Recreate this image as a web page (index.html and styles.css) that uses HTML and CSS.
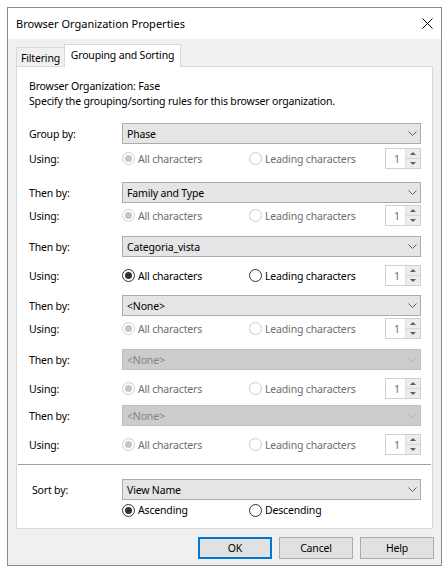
FILE: index.html
```html
<!DOCTYPE html>
<html lang="en">
<head>
<meta charset="utf-8">
<title>Browser Organization Properties</title>
<link rel="stylesheet" href="styles.css">
</head>
<body>
<div class="window">
  <div class="titlebar">
    <span class="title">Browser Organization Properties</span>
    <svg class="close" width="11" height="11" viewBox="0 0 11 11"><path d="M0.5 0.5L10.5 10.5M10.5 0.5L0.5 10.5" stroke="#000" stroke-width="1" fill="none"/></svg>
  </div>
  <div class="client">
    <div class="tabs">
      <div class="tab">Filtering</div>
      <div class="tab tab--active">Grouping and Sorting</div>
    </div>
    <div class="panel">
      <div class="intro">
        <div>Browser Organization: Fase</div>
        <div>Specify the grouping/sorting rules for this browser organization.</div>
      </div>

      <div class="rule g1">
        <div class="row"><span class="label">Group by:</span><div class="combo"><span>Phase</span><svg class="chev" width="9" height="5" viewBox="0 0 9 5"><path d="M0.5 0.5L4.5 4.5L8.5 0.5" fill="none" stroke="#606060"/></svg></div></div>
        <div class="row using"><span class="label">Using:</span><span class="radio is-disabled is-checked"><i></i>All characters</span><span class="radio is-disabled"><i></i>Leading characters</span><div class="spin"><span class="val">1</span><span class="arrows"><b class="up"></b><b class="down"></b></span></div></div>
      </div>

      <div class="rule g2">
        <div class="row"><span class="label">Then by:</span><div class="combo"><span>Family and Type</span><svg class="chev" width="9" height="5" viewBox="0 0 9 5"><path d="M0.5 0.5L4.5 4.5L8.5 0.5" fill="none" stroke="#606060"/></svg></div></div>
        <div class="row using"><span class="label">Using:</span><span class="radio is-disabled is-checked"><i></i>All characters</span><span class="radio is-disabled"><i></i>Leading characters</span><div class="spin"><span class="val">1</span><span class="arrows"><b class="up"></b><b class="down"></b></span></div></div>
      </div>

      <div class="rule g3">
        <div class="row"><span class="label">Then by:</span><div class="combo"><span>Categoria_vista</span><svg class="chev" width="9" height="5" viewBox="0 0 9 5"><path d="M0.5 0.5L4.5 4.5L8.5 0.5" fill="none" stroke="#606060"/></svg></div></div>
        <div class="row using"><span class="label">Using:</span><span class="radio is-checked"><i></i>All characters</span><span class="radio"><i></i>Leading characters</span><div class="spin"><span class="val">1</span><span class="arrows"><b class="up"></b><b class="down"></b></span></div></div>
      </div>

      <div class="rule g4">
        <div class="row"><span class="label">Then by:</span><div class="combo"><span>&lt;None&gt;</span><svg class="chev" width="9" height="5" viewBox="0 0 9 5"><path d="M0.5 0.5L4.5 4.5L8.5 0.5" fill="none" stroke="#606060"/></svg></div></div>
        <div class="row using"><span class="label">Using:</span><span class="radio is-disabled is-checked"><i></i>All characters</span><span class="radio is-disabled"><i></i>Leading characters</span><div class="spin"><span class="val">1</span><span class="arrows"><b class="up"></b><b class="down"></b></span></div></div>
      </div>

      <div class="rule g5">
        <div class="row"><span class="label">Then by:</span><div class="combo combo--disabled"><span>&lt;None&gt;</span><svg class="chev" width="9" height="5" viewBox="0 0 9 5"><path d="M0.5 0.5L4.5 4.5L8.5 0.5" fill="none" stroke="#b4b4b4"/></svg></div></div>
        <div class="row using"><span class="label">Using:</span><span class="radio is-disabled is-checked"><i></i>All characters</span><span class="radio is-disabled"><i></i>Leading characters</span><div class="spin"><span class="val">1</span><span class="arrows"><b class="up"></b><b class="down"></b></span></div></div>
      </div>

      <div class="rule g6">
        <div class="row"><span class="label">Then by:</span><div class="combo combo--disabled"><span>&lt;None&gt;</span><svg class="chev" width="9" height="5" viewBox="0 0 9 5"><path d="M0.5 0.5L4.5 4.5L8.5 0.5" fill="none" stroke="#b4b4b4"/></svg></div></div>
        <div class="row using"><span class="label">Using:</span><span class="radio is-disabled is-checked"><i></i>All characters</span><span class="radio is-disabled"><i></i>Leading characters</span><div class="spin"><span class="val">1</span><span class="arrows"><b class="up"></b><b class="down"></b></span></div></div>
      </div>

      <div class="sep"></div>

      <div class="sort">
        <div class="row"><span class="label label--sort">Sort by:</span><div class="combo"><span>View Name</span><svg class="chev" width="9" height="5" viewBox="0 0 9 5"><path d="M0.5 0.5L4.5 4.5L8.5 0.5" fill="none" stroke="#606060"/></svg></div></div>
        <div class="row order"><span class="label"></span><span class="radio is-checked"><i></i>Ascending</span><span class="radio"><i></i>Descending</span></div>
      </div>
    </div>
    <div class="buttons">
      <button class="btn btn--default">OK</button>
      <button class="btn">Cancel</button>
      <button class="btn">Help</button>
    </div>
  </div>
</div>
</body>
</html>
```

FILE: styles.css
```css
* { box-sizing: border-box; }
html, body { margin: 0; padding: 0; background: #ffffff; }
body {
  font-family: "Noto Sans", "Open Sans", sans-serif;
  font-size: 10.5px;
  letter-spacing: -0.17px;
  color: #000;
  padding: 7px 0 0 7px;
}
.window {
  width: 435px;
  height: 559px;
  border: 1px solid #8a8a8a;
  background: #f0f0f0;
  display: flex;
  flex-direction: column;
}
.titlebar {
  height: 31px;
  flex: none;
  background: #fff;
  display: flex;
  align-items: center;
  justify-content: space-between;
  padding: 0 8px 0 8px;
}
.title { font-size: 11px; letter-spacing: 0; }
.client {
  flex: 1;
  padding: 5px 8px 6px 8px;
  display: flex;
  flex-direction: column;
}
.tabs {
  display: flex;
  align-items: flex-end;
  height: 22px;
  flex: none;
}
.tab {
  height: 19px;
  width: 48px;
  border: 1px solid #d9d9d9;
  border-bottom: none;
  border-right: none;
  background: #f0f0f0;
  display: flex;
  align-items: center;
  justify-content: center;
  padding-top: 1px;
}
.tab--active {
  height: 23px;
  width: 117px;
  border-right: 1px solid #d9d9d9;
  background: #fff;
  margin-bottom: -1px;
  position: relative;
  z-index: 1;
  padding-top: 0;
  padding-bottom: 3px;
}
.panel {
  height: 463px;
  flex: none;
  border: 1px solid #d9d9d9;
  background: #fff;
  padding: 12px 11px 0 12px;
}
.intro { line-height: 15px; }

.row {
  display: grid;
  grid-template-columns: 93px 1fr;
  align-items: center;
  height: 21px;
}
.row.using { grid-template-columns: 93px 127px 1fr 36px; }
.row.order { grid-template-columns: 93px 127px 1fr; height: 16px; }
.label { white-space: nowrap; }
.label--sort { padding-left: 3px; }

.combo {
  height: 21px;
  border: 1px solid #acacac;
  background: #e5e5e5;
  display: flex;
  align-items: center;
  justify-content: space-between;
  padding: 0 3px 0 4px;
}
.combo--disabled {
  background: #cccccc;
  border-color: #c0c0c0;
  color: #838383;
}

.radio {
  display: inline-flex;
  align-items: center;
  gap: 3px;
  white-space: nowrap;
}
.radio i {
  width: 13px;
  height: 13px;
  border-radius: 50%;
  border: 1px solid #333;
  background: #fff;
  display: inline-flex;
  align-items: center;
  justify-content: center;
}
.radio.is-checked i::after {
  content: "";
  width: 7px;
  height: 7px;
  border-radius: 50%;
  background: #333;
}
.radio.is-disabled { color: #6d6d6d; }
.radio.is-disabled i { border-color: #cccccc; }
.radio.is-disabled.is-checked i::after { background: #c4c4c4; }

.spin {
  height: 21px;
  border: 1px solid #d0d0d0;
  background: #fff;
  display: flex;
}
.spin .val {
  flex: 1;
  color: #6d6d6d;
  padding-left: 8px;
  display: flex;
  align-items: center;
}
.spin .arrows {
  width: 15px;
  display: flex;
  flex-direction: column;
  background: #ececec;
  border-left: 1px solid #e0e0e0;
}
.spin .arrows b {
  flex: 1;
  display: flex;
  align-items: center;
  justify-content: center;
}
.spin .arrows b.up { border-bottom: 1px solid #d6d6d6; }
.spin .arrows b::after {
  content: "";
  width: 0;
  height: 0;
  border-left: 3px solid transparent;
  border-right: 3px solid transparent;
}
.spin .arrows b.up::after { border-bottom: 3px solid #606060; }
.spin .arrows b.down::after { border-top: 3px solid #606060; }

.g1 > .row:first-child { margin-top: 14px; }
.g1 > .using { margin-top: 4px; }
.g2 > .row:first-child { margin-top: 13px; }
.g2 > .using { margin-top: 2px; }
.g3 > .row:first-child { margin-top: 10px; }
.g3 > .using { margin-top: 8px; }
.g4 > .row:first-child { margin-top: 9px; }
.g4 > .using { margin-top: 2px; }
.g5 > .row:first-child { margin-top: 10px; }
.g5 > .using { margin-top: 8px; }
.g6 > .row:first-child { margin-top: 6px; }
.g6 > .using { margin-top: 8px; }

.sep {
  margin: 9px -10px 0 -11px;
  border-top: 1px solid #a0a0a0;
}
.sort > .row:first-child { margin-top: 14px; }
.sort > .order { margin-top: 2px; }

.buttons {
  display: flex;
  justify-content: flex-end;
  gap: 7px;
  margin-top: 8px;
  margin-right: -1px;
}
.btn {
  width: 74px;
  height: 22px;
  border: 1px solid #adadad;
  background: #e1e1e1;
  font-family: inherit;
  font-size: inherit;
  letter-spacing: inherit;
  color: #000;
  padding: 0;
}
.btn--default { border: 2px solid #0078d7; }
```
